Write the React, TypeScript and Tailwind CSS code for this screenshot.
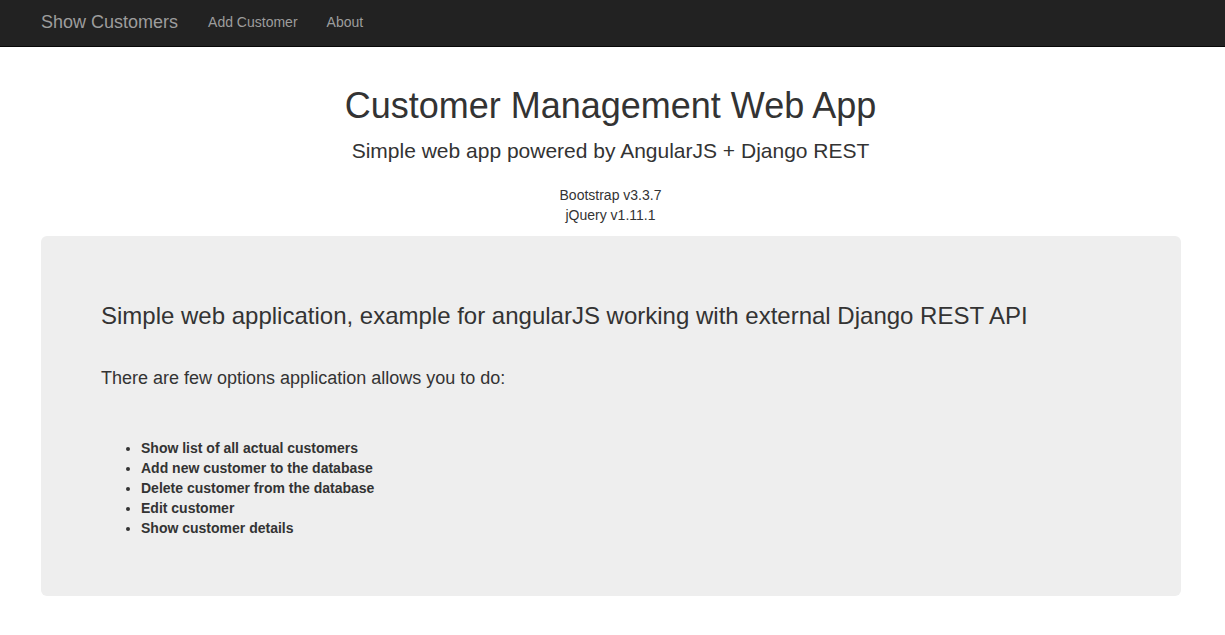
export default function App() {
  const items = [
    "Show list of all actual customers",
    "Add new customer to the database",
    "Delete customer from the database",
    "Edit customer",
    "Show customer details",
  ];
  return (
    <div className="min-h-[635px] bg-white text-[#333] text-[14px] leading-[20px]" style={{ fontFamily: '"Liberation Sans", Arial, sans-serif' }}>
      <nav className="h-[47px] bg-[#222] border-b border-[#080808]">
        <div className="flex items-center h-[46px] pb-[2px] pl-[41px]">
          <span className="text-[18px] text-[#9d9d9d] leading-[20px]">Show Customers</span>
          <span className="ml-[30px] text-[#9d9d9d]">Add Customer</span>
          <span className="ml-[29px] text-[#9d9d9d]">About</span>
        </div>
      </nav>
      <div className="flex flex-col items-center pt-[39px] pr-[4px]">
        <h1 className="text-[36px] leading-[40px]">Customer Management Web App</h1>
        <h3 className="text-[21px] leading-[26px] mt-[12px]">Simple web app powered by AngularJS + Django REST</h3>
        <p className="mt-[21px]">Bootstrap v3.3.7</p>
        <p>jQuery v1.11.1</p>
      </div>
      <div className="ml-[41px] mt-[11px] w-[1140px] h-[360px] rounded-[6px] bg-[#eee] px-[60px] pt-[65px]">
        <h3 className="text-[24px] leading-[30px]">Simple web application, example for angularJS working with external Django REST API</h3>
        <p className="mt-[34px] text-[18px] leading-[26px]">There are few options application allows you to do:</p>
        <ul className="mt-[47px] pl-[40px] list-disc font-bold">
          {items.map((t) => (
            <li key={t}>{t}</li>
          ))}
        </ul>
      </div>
    </div>
  );
}
